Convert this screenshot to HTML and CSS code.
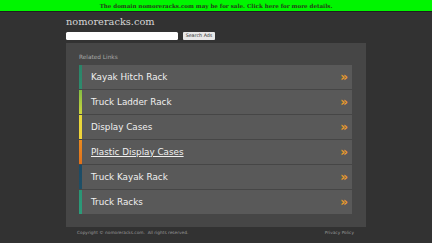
FILE: index.html
```html
<!DOCTYPE html>
<html>
<head>
<meta charset="utf-8">
<link rel="stylesheet" href="styles.css">
</head>
<body>
<div class="banner">The domain nomoreracks.com may be for sale. Click here for more details.</div>
<div class="wrap">
  <div class="title">nomoreracks.com</div>
  <div class="search">
    <input class="search-input" type="text">
    <button class="search-btn">Search Ads</button>
  </div>
  <div class="panel">
    <div class="related">Related Links</div>
    <div class="links">
      <div class="row c1"><span class="label">Kayak Hitch Rack</span><span class="chev">»</span></div>
      <div class="row c2"><span class="label">Truck Ladder Rack</span><span class="chev">»</span></div>
      <div class="row c3"><span class="label">Display Cases</span><span class="chev">»</span></div>
      <div class="row c4"><span class="label under">Plastic Display Cases</span><span class="chev">»</span></div>
      <div class="row c5"><span class="label">Truck Kayak Rack</span><span class="chev">»</span></div>
      <div class="row c6"><span class="label">Truck Racks</span><span class="chev">»</span></div>
    </div>
  </div>
  <div class="footer">
    <span>Copyright © nomoreracks.com.&nbsp; All rights reserved.</span>
    <span class="privacy">Privacy Policy</span>
  </div>
</div>
</body>
</html>
```
FILE: styles.css
```css
html, body {
  margin: 0;
  padding: 0;
}
body {
  background: #323232;
  width: 432px;
  height: 243px;
  overflow: hidden;
  font-family: "DejaVu Sans", sans-serif;
}
.banner {
  height: 12px;
  background: #00f500;
  color: #24401a;
  font-family: "DejaVu Serif", serif;
  font-weight: bold;
  font-size: 5.55px;
  line-height: 12px;
  text-align: center;
  border-bottom: 1px solid #1f1f1f;
  box-sizing: border-box;
}
.wrap {
  width: 300px;
  margin: 0 auto;
}
.title {
  font-family: "DejaVu Serif", serif;
  font-size: 9.8px;
  line-height: 12px;
  color: #d6d6d6;
  padding-top: 3.5px;
  height: 16px;
  box-sizing: border-box;
}
.search {
  display: flex;
  align-items: center;
  gap: 5px;
  height: 9px;
  margin-top: 3px;
}
.search-input {
  width: 112px;
  height: 8px;
  border: none;
  border-radius: 1.5px;
  background: #fff;
  padding: 0;
  margin: 0;
}
.search-btn {
  width: 32px;
  height: 8px;
  padding: 0;
  margin: 0;
  border: none;
  border-radius: 1px;
  background: #e8e8e8;
  color: #333;
  font-family: "DejaVu Sans", sans-serif;
  font-size: 4.8px;
  line-height: 8px;
}
.panel {
  margin-top: 3px;
  background: #464646;
  padding: 10px 14px 13px 13px;
  height: 184px;
  box-sizing: border-box;
}
.related {
  font-size: 5.8px;
  line-height: 8px;
  color: #a8a8a8;
  height: 11.5px;
}
.links {
  display: flex;
  flex-direction: column;
  gap: 1px;
}
.row {
  height: 24px;
  background: #595959;
  display: flex;
  align-items: center;
  justify-content: space-between;
  padding: 0 4px 0 9px;
  border-left: 3px solid;
  color: #f0f0f0;
}
.c1 { border-image: linear-gradient(#2a8468, #2e8c6e) 1; }
.c2 { border-image: linear-gradient(#80bc44, #d0d63c) 1; }
.c3 { border-image: linear-gradient(#e6da3a, #f2d23a) 1; }
.c4 { border-image: linear-gradient(#ea8c20, #e0701c) 1; }
.c5 { border-image: linear-gradient(#1c4a66, #1e5066) 1; }
.c6 { border-image: linear-gradient(#2a9474, #2c9c7a) 1; }
.label {
  font-size: 8.8px;
  line-height: 12px;
}
.under {
  text-decoration: underline;
}
.chev {
  color: #e89a2c;
  font-weight: bold;
  font-size: 12px;
  line-height: 12px;
}
.footer {
  display: flex;
  justify-content: space-between;
  padding: 3px 12px 0 11px;
  font-size: 4.3px;
  line-height: 6px;
  color: #9a9a9a;
}
```
